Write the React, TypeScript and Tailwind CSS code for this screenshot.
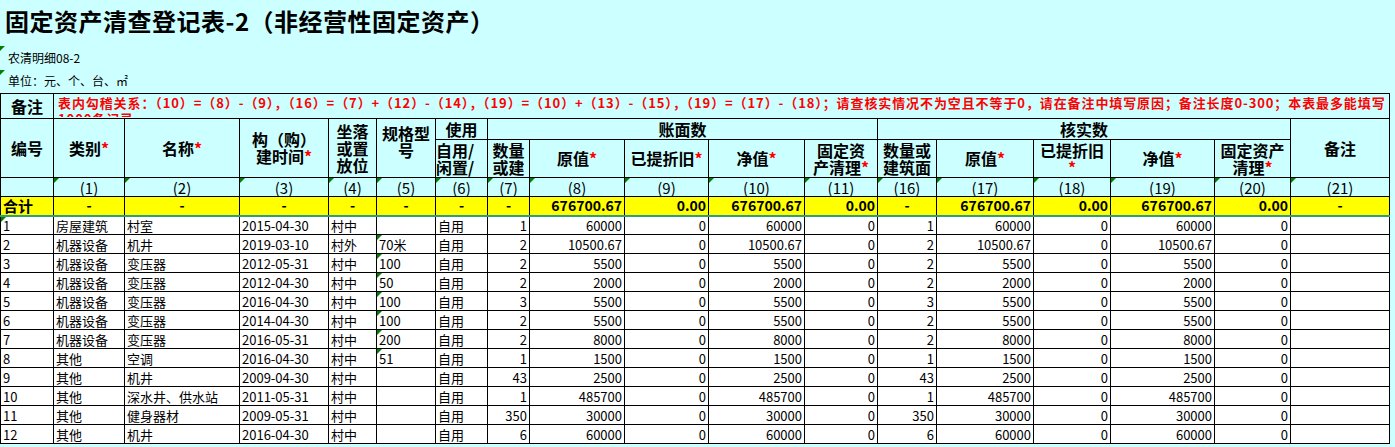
import React from "react";

const W = [53,71,115,89,48,59,52,42,95,84,96,73,59,97,77,104,76,99];
const rows: (string|number)[][] = [
  ["1","房屋建筑","村室","2015-04-30","村中","","自用",1,"60000",1,"60000"],
  ["2","机器设备","机井","2019-03-10","村外","70米","自用",2,"10500.67",2,"10500.67"],
  ["3","机器设备","变压器","2012-05-31","村中","100","自用",2,"5500",2,"5500"],
  ["4","机器设备","变压器","2012-04-30","村中","50","自用",2,"2000",2,"2000"],
  ["5","机器设备","变压器","2016-04-30","村中","100","自用",3,"5500",3,"5500"],
  ["6","机器设备","变压器","2014-04-30","村中","100","自用",2,"5500",2,"5500"],
  ["7","机器设备","变压器","2016-05-31","村中","200","自用",2,"8000",2,"8000"],
  ["8","其他","空调","2016-04-30","村中","51","自用",1,"1500",1,"1500"],
  ["9","其他","机井","2009-04-30","村中","","自用",43,"2500",43,"2500"],
  ["10","其他","深水井、供水站","2011-05-31","村中","","自用",1,"485700",1,"485700"],
  ["11","其他","健身器材","2009-05-31","村中","","自用",350,"30000",350,"30000"],
  ["12","其他","机井","2016-04-30","村中","","自用",6,"60000",6,"60000"],
];

const Tri = () => (
  <span className="absolute left-0 top-0 w-0 h-0 border-t-[5px] border-r-[5px] border-t-[#008000] border-r-transparent" />
);
const S = () => <span className="text-[#ff0000]">*</span>;
const th = "border border-black text-center font-bold leading-[17px] p-0";
const td = "border border-black h-[19px] leading-[17px] px-[2px] whitespace-nowrap overflow-hidden relative";

export default function App() {
  return (
    <div className="w-[1395px] h-[447px] overflow-hidden bg-[#ccffff] text-black" style={{ fontFamily: '"Noto Sans CJK SC", "DejaVu Sans", sans-serif' }}>
      <div className="h-[46px] pl-[5px] pt-[4px] text-[24px] font-bold leading-[34px] tracking-[0.5px]">固定资产清查登记表-2（非经营性固定资产）</div>
      <div className="relative h-[24px] pl-[8px] text-[12px] leading-[24px]"><Tri />农清明细08-2</div>
      <div className="relative h-[23px] pl-[8px] text-[12px] leading-[22px]"><Tri />单位：元、个、台、㎡</div>
      <table className="table-fixed border-collapse w-[1389px] text-[14px]">
        <colgroup>{W.map((w, i) => <col key={i} style={{ width: w }} />)}</colgroup>
        <tbody>
          <tr className="h-[25px]">
            <td className={th + " text-[16px]"}>备注</td>
            <td colSpan={17} className="border border-black p-0 pl-[4px] align-top">
              <div className="h-[23px] overflow-hidden text-[#ff0000] font-bold text-[13px] tracking-[0.9px] leading-[16px] whitespace-normal pt-[1px]">
                表内勾稽关系：（10）=（8）-（9），（16）=（7）+（12）-（14），（19）=（10）+（13）-（15），（19）=（17）-（18）；请查核实情况不为空且不等于0，请在备注中填写原因；备注长度0-300；本表最多能填写1000条记录。
              </div>
            </td>
          </tr>
          <tr className="h-[21px] text-[16px]">
            <td rowSpan={2} className={th}>编号</td>
            <td rowSpan={2} className={th}>类别<S /></td>
            <td rowSpan={2} className={th}>名称<S /></td>
            <td rowSpan={2} className={th}>构（购）<br />建时间<S /></td>
            <td rowSpan={2} className={th}>坐落<br />或置<br />放位</td>
            <td rowSpan={2} className={th + " align-top pt-[6px]"}>规格型<br />号</td>
            <td className={th}>使用</td>
            <td colSpan={5} className={th}>账面数</td>
            <td colSpan={5} className={th}>核实数</td>
            <td rowSpan={2} className={th}>备注</td>
          </tr>
          <tr className="h-[38px] text-[16px]">
            <td className={th + " text-left"}>自用/<br />闲置/</td>
            <td className={th}>数量<br />或建</td>
            <td className={th}>原值<S /></td>
            <td className={th}>已提折旧<S /></td>
            <td className={th}>净值<S /></td>
            <td className={th}>固定资<br />产清理<S /></td>
            <td className={th}>数量或<br />建筑面</td>
            <td className={th}>原值<S /></td>
            <td className={th}>已提折旧<br /><S /></td>
            <td className={th}>净值<S /></td>
            <td className={th}>固定资产<br />清理<S /></td>
          </tr>
          <tr className="h-[19px] text-[15px]">
            <td className={th}></td>
            {["1","2","3","4","5","6","7","8","9","10","11","16","17","18","19","20","21"].map((t, i) => (
              <td key={i} className={th + " font-normal relative"}><Tri />({t})</td>
            ))}
          </tr>
          <tr className="h-[19px] bg-[#ffff00] font-bold text-[14px] border-b-2 border-b-[#2e9e7e]">
            <td className={td + " text-left text-[15px] leading-[16px]"}>合计</td>
            {["-","-","-","-","-","-","-"].map((t, i) => <td key={i} className={td + " text-center"}>{t}</td>)}
            <td className={td + " text-right"}>676700.67</td>
            <td className={td + " text-right"}>0.00</td>
            <td className={td + " text-right"}>676700.67</td>
            <td className={td + " text-right"}>0.00</td>
            <td className={td + " text-center"}>-</td>
            <td className={td + " text-right"}>676700.67</td>
            <td className={td + " text-right"}>0.00</td>
            <td className={td + " text-right"}>676700.67</td>
            <td className={td + " text-right"}>0.00</td>
            <td className={td + " text-center"}>-</td>
          </tr>
          {rows.map((r, i) => (
            <tr key={i} className="bg-white text-[13px]">
              <td className={td}>{i === 0 && <Tri />}{r[0]}</td>
              <td className={td}>{r[1]}</td>
              <td className={td}>{r[2]}</td>
              <td className={td}>{r[3]}</td>
              <td className={td}>{r[4]}</td>
              <td className={td}>{r[5] !== "" && <Tri />}{r[5]}</td>
              <td className={td}>{r[6]}</td>
              <td className={td + " text-right"}>{r[7]}</td>
              <td className={td + " text-right"}>{r[8]}</td>
              <td className={td + " text-right"}>0</td>
              <td className={td + " text-right"}>{r[8]}</td>
              <td className={td + " text-right"}>0</td>
              <td className={td + " text-right"}>{r[9]}</td>
              <td className={td + " text-right"}>{r[10]}</td>
              <td className={td + " text-right"}>0</td>
              <td className={td + " text-right"}>{r[10]}</td>
              <td className={td + " text-right"}>0</td>
              <td className={td}></td>
            </tr>
          ))}
        </tbody>
      </table>
    </div>
  );
}
